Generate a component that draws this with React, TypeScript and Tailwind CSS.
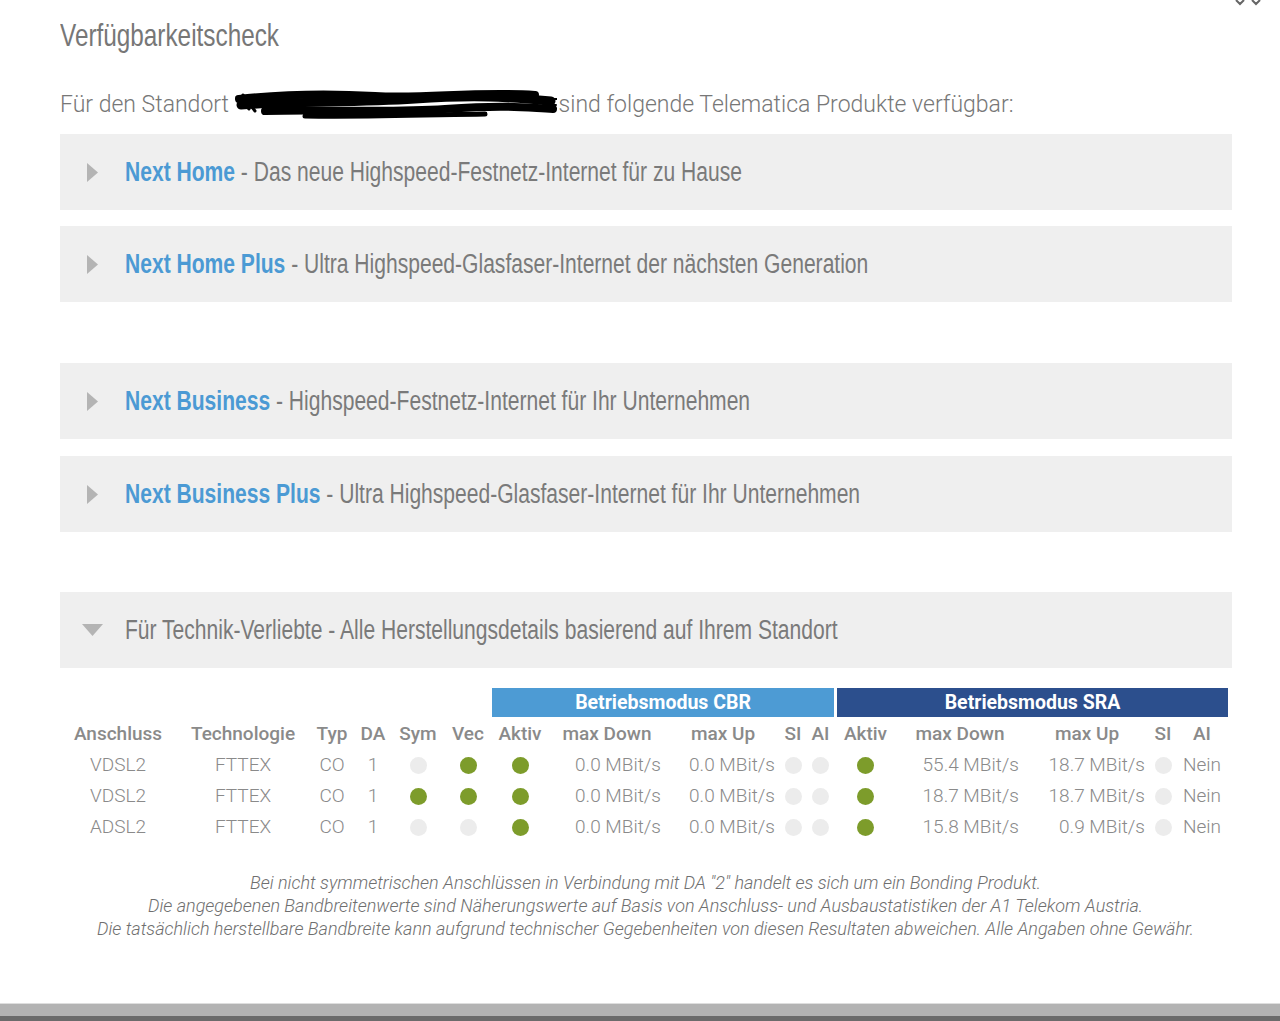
import React from "react";

const HEAD = "font-['Liberation_Sans',Arial,sans-serif]";
const ROBOTO = "font-['Roboto','Noto_Sans',sans-serif]";

function TriRight() {
  return (
    <svg width="11" height="19" viewBox="0 0 11 19">
      <polygon points="0,0 11,9.5 0,19" fill="#b4b4b4" />
    </svg>
  );
}
function TriDown() {
  return (
    <svg width="21" height="12" viewBox="0 0 21 12">
      <polygon points="0,0 21,0 10.5,12" fill="#b4b4b4" />
    </svg>
  );
}

function Panel({ title, rest, open }: { title?: string; rest: string; open?: boolean }) {
  return (
    <div className="h-[76px] bg-[#efefef] flex items-center">
      <div className="w-[65px] flex justify-center items-center">{open ? <TriDown /> : <TriRight />}</div>
      <span
        className={`${HEAD} inline-block origin-left scale-x-[0.78] whitespace-nowrap text-[27px] leading-[30px] text-[#7a7a7a]`}
      >
        {title && <b className="font-bold text-[#4b9ad4]">{title}</b>}
        {rest}
      </span>
    </div>
  );
}

function Dot({ on }: { on: boolean }) {
  return <span className={`inline-block w-[17px] h-[17px] rounded-full ${on ? "bg-[#7d9c2b]" : "bg-[#ececec]"}`} />;
}

type Row = {
  a: string;
  sym: boolean;
  vec: boolean;
  down2: string;
  up2: string;
};

const rows: Row[] = [
  { a: "VDSL2", sym: false, vec: true, down2: "55.4 MBit/s", up2: "18.7 MBit/s" },
  { a: "VDSL2", sym: true, vec: true, down2: "18.7 MBit/s", up2: "18.7 MBit/s" },
  { a: "ADSL2", sym: false, vec: false, down2: "15.8 MBit/s", up2: "0.9 MBit/s" },
];

const GRID =
  "grid grid-cols-[116px_134px_44px_38px_52px_48px_56px_118px_114px_26px_29px_61px_128px_126px_26px_52px]";

function Scribble() {
  return (
    <svg width="322" height="36" viewBox="0 0 322 36" className="absolute left-0 top-[-3px]">
      <g stroke="#000" strokeLinecap="round" fill="none">
        <path d="M4 12 C 40 8, 90 6, 140 9 S 240 4, 300 8" strokeWidth="8" />
        <path d="M6 18 C 60 14, 120 16, 180 12 S 270 10, 316 14" strokeWidth="9" />
        <path d="M30 24 C 90 22, 150 26, 210 22 S 280 20, 318 22" strokeWidth="8" />
        <path d="M70 29 C 130 30, 190 28, 250 27" strokeWidth="5" />
        <path d="M2 10 L 14 22 M 8 8 L 20 24" strokeWidth="3" />
        <path d="M310 12 L 322 12 M 308 18 L 321 18 M 312 24 L 320 24" strokeWidth="2" />
      </g>
    </svg>
  );
}

export default function App() {
  const th = `${ROBOTO} text-[19px] font-medium text-[#8a8a8a] flex items-center`;
  const td = `${ROBOTO} text-[19px] font-light text-[#8a8a8a] flex items-center`;
  return (
    <div className="relative min-h-[1021px] bg-white flex flex-col">
      <svg width="30" height="6" viewBox="0 0 30 6" className="absolute right-[16px] top-0">
        <path d="M2 0 L 6 4 L 10 0 M 18 0 L 22 4 L 26 0" stroke="#666" strokeWidth="2" fill="none" />
      </svg>
      <div className="ml-[60px] w-[1172px]">
        <div className="pt-[17px] h-[53px]">
          <span
            className={`${HEAD} inline-block origin-left scale-x-[0.76] whitespace-nowrap text-[32px] leading-[36px] text-[#777777]`}
          >
            Verfügbarkeitscheck
          </span>
        </div>
        <div className={`${ROBOTO} mt-[37px] h-[30px] flex items-center text-[23px] leading-[30px] font-light text-[#777777] whitespace-nowrap`}>
          <span>Für den Standort&nbsp;</span>
          <span className="relative inline-block w-[324px] h-[30px]">
            <Scribble />
          </span>
          <span>sind folgende Telematica Produkte verfügbar:</span>
        </div>

        <div className="mt-[14px]">
          <Panel title="Next Home" rest=" - Das neue Highspeed-Festnetz-Internet für zu Hause" />
        </div>
        <div className="mt-[16px]">
          <Panel title="Next Home Plus" rest=" - Ultra Highspeed-Glasfaser-Internet der nächsten Generation" />
        </div>
        <div className="mt-[61px]">
          <Panel title="Next Business" rest=" - Highspeed-Festnetz-Internet für Ihr Unternehmen" />
        </div>
        <div className="mt-[17px]">
          <Panel title="Next Business Plus" rest=" - Ultra Highspeed-Glasfaser-Internet für Ihr Unternehmen" />
        </div>
        <div className="mt-[60px]">
          <Panel open rest="Für Technik-Verliebte - Alle Herstellungsdetails basierend auf Ihrem Standort" />
        </div>

        <div className="mt-[20px] w-[1168px]">
          <div className={`${GRID} h-[27px]`}>
            <div className="col-span-6" />
            <div
              className={`${ROBOTO} col-span-5 mr-[1px] bg-[#4d9bd4] text-white text-[19.5px] font-bold flex items-center justify-center`}
            >
              Betriebsmodus CBR
            </div>
            <div
              className={`${ROBOTO} col-span-5 ml-[2px] bg-[#2c4f8d] text-white text-[19.5px] font-bold flex items-center justify-center`}
            >
              Betriebsmodus SRA
            </div>
          </div>
          <div className={`${GRID} h-[31px] mt-[4px]`}>
            {["Anschluss", "Technologie", "Typ", "DA", "Sym", "Vec", "Aktiv", "max Down", "max Up", "SI", "AI", "Aktiv", "max Down", "max Up", "SI", "AI"].map(
              (h, i) => (
                <div key={i} className={`${th} justify-center`}>
                  {h}
                </div>
              )
            )}
          </div>
          {rows.map((r, i) => (
            <div key={i} className={`${GRID} h-[31px]`}>
              <div className={`${td} justify-center`}>{r.a}</div>
              <div className={`${td} justify-center`}>FTTEX</div>
              <div className={`${td} justify-center`}>CO</div>
              <div className={`${td} justify-center`}>1</div>
              <div className="flex items-center justify-center"><Dot on={r.sym} /></div>
              <div className="flex items-center justify-center"><Dot on={r.vec} /></div>
              <div className="flex items-center justify-center"><Dot on={true} /></div>
              <div className={`${td} justify-end pr-[5px]`}>0.0 MBit/s</div>
              <div className={`${td} justify-end pr-[5px]`}>0.0 MBit/s</div>
              <div className="flex items-center justify-center"><Dot on={false} /></div>
              <div className="flex items-center justify-center"><Dot on={false} /></div>
              <div className="flex items-center justify-center"><Dot on={true} /></div>
              <div className={`${td} justify-end pr-[5px]`}>{r.down2}</div>
              <div className={`${td} justify-end pr-[5px]`}>{r.up2}</div>
              <div className="flex items-center justify-center"><Dot on={false} /></div>
              <div className={`${td} justify-center`}>Nein</div>
            </div>
          ))}
        </div>

        <div className={`${ROBOTO} mt-[28px] w-[1171px] text-center italic font-light text-[18px] leading-[23px] text-[#6f6f6f]`}>
          <div>Bei nicht symmetrischen Anschlüssen in Verbindung mit DA "2" handelt es sich um ein Bonding Produkt.</div>
          <div>Die angegebenen Bandbreitenwerte sind Näherungswerte auf Basis von Anschluss- und Ausbaustatistiken der A1 Telekom Austria.</div>
          <div>Die tatsächlich herstellbare Bandbreite kann aufgrund technischer Gegebenheiten von diesen Resultaten abweichen. Alle Angaben ohne Gewähr.</div>
        </div>
      </div>

      <div className="mt-auto">
        <div className="h-[13px] bg-[#b3b3b3] border-t border-[#dedede]" />
        <div className="h-[5px] bg-[#6b6b6b]" />
      </div>
    </div>
  );
}
